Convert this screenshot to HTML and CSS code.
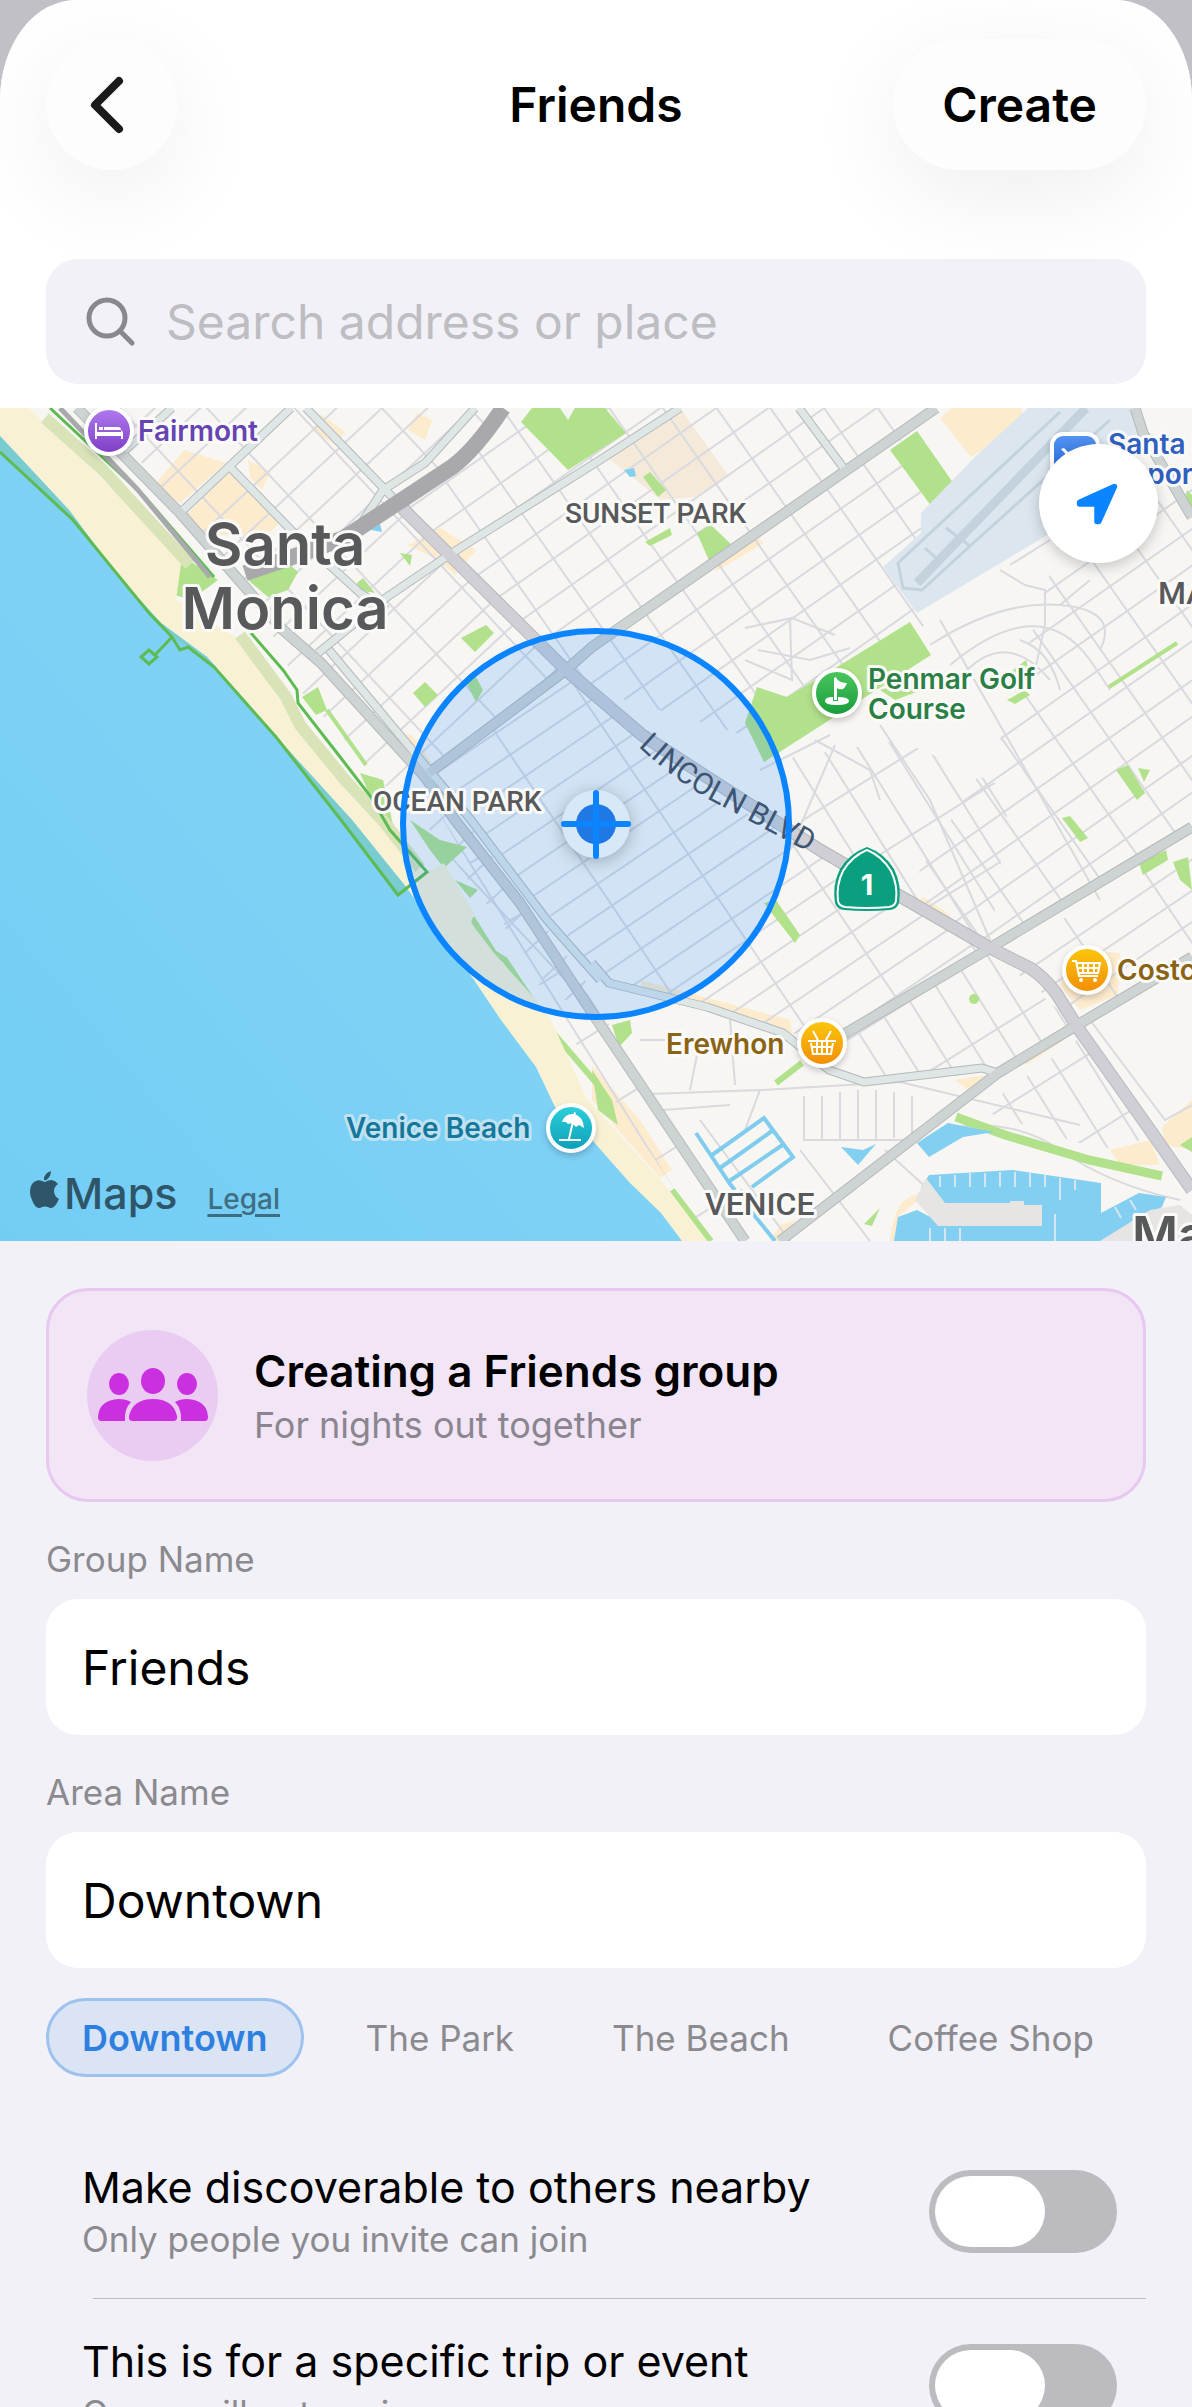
FILE: index.html
```
<!DOCTYPE html>
<html lang="en">
<head>
    <meta charset="UTF-8">
    <meta name="viewport" content="width=device-width, initial-scale=1.0">
    <title>Friends</title>
    <link rel="stylesheet" href="styles.css">
</head>
<body>
    <main class="sheet">
        <header class="top-bar">
            <button type="button" class="back-button" aria-label="Back">
                <svg width="36" height="60" viewBox="0 0 36 60"><path d="M31 6L7 30L31 54"/></svg>
            </button>
            <h1>Friends</h1>
            <button type="submit" form="group-form" class="create-button">Create</button>
        </header>

        <div class="search-row">
            <label class="search">
                <svg width="50" height="50" viewBox="0 0 50 50"><circle cx="21" cy="21" r="18"/><path d="M34 34L46 46"/></svg>
                <input type="search" placeholder="Search address or place" aria-label="Search address or place">
            </label>
        </div>

        <section class="map">
            <svg class="map-canvas" viewBox="0 408 1192 833" preserveAspectRatio="xMidYMid slice">
                <defs>
                    <linearGradient id="sea" x1="0" y1="1" x2="1" y2="0"><stop offset="0" stop-color="#72cdf5"/><stop offset="1" stop-color="#8ad6f4"/></linearGradient>
                    <linearGradient id="purple" x2="0" y2="1"><stop stop-color="#b07cf0"/><stop offset="1" stop-color="#7d3cc4"/></linearGradient>
                    <linearGradient id="green" x2="0" y2="1"><stop stop-color="#4cc75f"/><stop offset="1" stop-color="#179b3b"/></linearGradient>
                    <linearGradient id="orange" x2="0" y2="1"><stop stop-color="#fbc80c"/><stop offset="1" stop-color="#f28c06"/></linearGradient>
                    <linearGradient id="teal" x2="0" y2="1"><stop stop-color="#2fd0dc"/><stop offset="1" stop-color="#0a9fb8"/></linearGradient>
                    <linearGradient id="blue" x2="0" y2="1"><stop stop-color="#5496f2"/><stop offset="1" stop-color="#2060d8"/></linearGradient>
                    <pattern id="grid-a" width="64" height="31" patternUnits="userSpaceOnUse" patternTransform="rotate(-43)"><path class="street" d="M0 1H64M1 0V31"/></pattern>
                    <pattern id="grid-b" width="44" height="62" patternUnits="userSpaceOnUse" patternTransform="rotate(-35)"><path class="street" d="M0 1H44M1 0V62M0 31H44"/></pattern>
                    <pattern id="grid-c" width="92" height="26" patternUnits="userSpaceOnUse" patternTransform="rotate(-34)"><path class="street" d="M0 1H92M1 0V26"/></pattern>
                    <pattern id="grid-d" width="30" height="70" patternUnits="userSpaceOnUse" patternTransform="rotate(-32)"><path class="street" d="M0 1H30M1 0V70"/></pattern>
                    <path id="lincoln" d="M638 746Q676 782 714 802T834 866"/>
                </defs>

                <rect y="408" width="1192" height="833" fill="#f7f6f2"/>

                <!-- Built-up areas -->
                <g fill="#fdebcd">
                    <path d="M230 470L279 523L268 535H207L184 517ZM184 450L226 463L180 503L153 487ZM417 413L432 420L425 440L408 430ZM312 430L322 415L345 432L335 445ZM248 460L270 472L262 490L250 478ZM408 545L440 528L476 550L455 575L438 560Z"/>
                    <path d="M940 418L952 408H1021L1024 423L971 457ZM715 572L764 543L750 530L722 552ZM1059 985L1085 950L1120 953L1118 995L1080 1010ZM1162 1127L1192 1100V1150L1165 1145ZM1110 1150L1150 1140L1160 1165L1120 1165ZM1014 1060L1060 1030L1064 1040L1026 1065ZM910 900L925 898L950 915L945 925Z"/>
                    <path d="M592 1066L640 1120L672 1170L660 1178L592 1100ZM640 980L790 1020L792 1034L646 994ZM398 733L412 735L440 775L430 782ZM955 1080L985 1075L975 1095ZM890 1241Q895 1190 925 1195L898 1217L900 1241ZM780 1225L795 1220L785 1241H770Z"/>
                </g>
                <path fill="#f5ead9" d="M607 457L680 408L728 475L695 497L661 500Z"/>

                <!-- Side streets -->
                <path fill="url(#grid-a)" d="M95 408H500L400 508L566 670L429 773L250 590Z"/>
                <path fill="url(#grid-b)" d="M500 408H940L890 450L940 518L883 567L925 625L760 740L592 690L402 508Z"/>
                <path fill="url(#grid-c)" d="M566 670L700 790L820 850L990 948L830 1043L610 985L429 773Z"/>
                <path fill="url(#grid-b)" d="M1060 540L1192 470V830L990 948L905 895L1000 740Z"/>
                <path fill="url(#grid-d)" d="M764 762L900 740L1010 790L990 948L820 850Z"/>
                <path fill="url(#grid-d)" d="M990 948L1078 1028L998 1073L864 1082L829 1043ZM420 780L600 1010L745 1241H710L560 1020ZM1084 1035L1155 1137L1100 1150L980 1110Z"/>
                <path fill="url(#grid-a)" d="M250 590L429 773L600 1000L560 1000L430 830L380 780L300 690Z"/>
                <path fill="url(#grid-c)" d="M1000 960L1192 835V950L1080 1022Z"/>
                <g class="street">
                    <path d="M930 645Q1000 600 1060 605T1100 650M950 665Q1040 590 1090 660L1110 690M950 690Q1000 620 1050 680M1000 570L1025 585L1045 590V625L1035 670M1010 565L1050 540M1060 605L1090 580M745 628L792 618L835 635M758 650L810 660L850 648M745 660L792 680L790 618M760 770L830 735M815 740L870 770L880 800M880 725L930 800L990 940M835 745L790 850M1020 640Q1050 650 1060 690M940 620L1100 900"/>
                    <path d="M650 1094L760 1090L900 1082L1080 1125M760 1090L745 1130M804 1096V1140H912M822 1096V1140M840 1092V1140M858 1090V1140M876 1090V1140M894 1092V1138M912 1096V1138M700 1040L690 1090M730 1020L735 1085M663 1110L730 1105M640 1040L790 1040M800 1150L870 1241M885 1150L940 1200M700 1120L790 1241M940 1130Q1010 1115 1060 1150T1180 1200M1090 1020L1165 1120L1192 1105"/>
                </g>

                <!-- Parks -->
                <g fill="#b2e18b">
                    <path d="M532 408L521 422L568 470L626 433L605 408L575 408L568 420L560 408ZM248 580L290 565L298 572L288 590L268 597ZM357 583L363 578L375 593L360 590ZM486 625L494 633L475 652L461 638ZM425 682L438 695L425 707L413 693ZM318 687L327 710L316 715L302 697ZM184 557L218 580L191 600L168 593ZM360 773L383 780L393 825L372 800ZM410 820L440 840L467 847L444 868L430 850ZM465 680L475 675L483 690L476 702ZM400 553L412 555L410 566Z"/>
                    <path d="M890 450L917 431L963 497L940 518ZM697 533L711 525L734 547L711 565ZM910 622L931 655L764 762L745 723L757 687L787 697L837 667ZM880 690L940 672L935 685L895 700ZM1007 675L1026 660L1029 670L1010 683ZM1007 700L1025 690L1030 695L1015 704ZM1116 770L1128 765L1145 793L1137 800ZM1138 768L1150 770L1144 782ZM645 542L670 528L672 535L650 546ZM643 477L650 472L666 490L658 497Z"/>
                    <path d="M764 903L776 900L800 935L795 943ZM1139 863L1166 850L1168 860L1143 875ZM1173 862L1188 857L1192 890L1180 880ZM612 1025L630 1020L632 1033L619 1047ZM592 1070L612 1100L618 1125L598 1110ZM1062 818L1070 816L1088 838L1080 842ZM1187 490L1192 495V515L1185 505ZM864 1224L880 1208L872 1226ZM1180 1145L1192 1137V1152ZM455 880L478 890L470 898Z"/>
                    <circle cx="974" cy="999" r="5"/>
                </g>
                <g fill="none" stroke="#b2e18b">
                    <path stroke-width="9" d="M956 1117L1005 1135L1089 1160L1162 1176"/>
                    <path stroke-width="6" d="M776 1083L802 1063M672 1190L711 1241M472 918L494 953L505 960L555 1035L598 1085"/>
                    <path stroke-width="4" d="M1109 687L1177 643M327 710L366 765"/>
                </g>

                <!-- Airport -->
                <path fill="#dce6ee" d="M1028 408H1135L1143 440L1100 500L1044 537L917 613L883 567L921 533V513L975 457Z"/>
                <g fill="none" stroke="#c4d2dd">
                    <path stroke-width="9" d="M1086 408L917 583"/>
                    <path stroke-width="3" d="M1060 412L898 563L903 588L922 590L970 546L1110 420M946 528L970 546M925 548L936 558"/>
                </g>

                <!-- Sea and beach -->
                <path fill="#f8f1d3" d="M0 408H29L103 480L182 557L176 600L240 640L280 700L345 790L425 873L444 863L474 913L471 923L494 953L536 1000L551 1020L586 1097L669 1190L707 1241H600L0 500Z"/>
                <path fill="none" stroke="#d8e3b7" stroke-width="12" d="M45 418L103 470L190 565M240 635L286 697L300 725L345 780L384 822L420 868"/>
                <path fill="url(#sea)" d="M0 436L69 510L119 577L161 623L207 657L245 700L291 753L352 820L406 887L474 980L501 1020L536 1067L555 1107L592 1140L630 1183L661 1213L682 1241H0Z"/>
                <path fill="#79ccd0" d="M0 436L69 510L119 577L161 623L207 657L245 700L291 753L352 820L406 887L398 895L341 820L276 737L214 667L188 647L172 637L149 613L73 520L0 452Z"/>
                <path fill="none" stroke="#5dbb52" stroke-width="3" d="M0 452L73 520L149 613L172 637L180 650L188 647L214 667L276 737L341 820L398 895L427 872L390 830L371 797L344 762L298 703L297 690L283 670L251 633M50 408L145 497L214 577M172 637L155 655M149 650L157 657L149 664L141 657Z"/>
                <g fill="#82cff1">
                    <path d="M929 1175L1013 1170L1101 1183V1213L1139 1193L1166 1197L1162 1207L1101 1241H894L898 1217L917 1210L936 1220V1208L921 1187ZM917 1143L948 1123L994 1132L963 1137L929 1157ZM841 1147L863 1150L876 1144L858 1165ZM624 470L634 468L636 476L630 477ZM371 530L380 524L382 532Z"/>
                </g>
                <path fill="#e6e5e3" d="M926 1178L945 1203H1010V1201H1024V1205H1042V1226H938L915 1200Z"/>
                <path fill="#e6e5e3" d="M1100 1241L1150 1210L1180 1205L1192 1215V1241Z"/>
                <path fill="none" stroke="#d5e6ef" stroke-width="2" d="M940 1176V1187M955 1175V1187M970 1173V1187M985 1173V1187M1000 1172V1187M1015 1172V1187M1030 1173V1187M1045 1175V1187M1060 1178V1200M1075 1180V1190M930 1228V1241M945 1228V1241M960 1228V1241M1055 1214V1241M1115 1207L1121 1218M1130 1200L1136 1210"/>
                <path fill="none" stroke="#80ccee" stroke-width="4" d="M696 1133L712 1157L730 1184L735 1190M712 1155L764 1118L793 1157L752 1187M720 1168L772 1131M728 1182L784 1144M740 1190L750 1210L775 1241"/>

                <!-- Main roads -->
                <g class="road-edge">
                    <path stroke-width="9" d="M680 408L600 460L452 553L387 597L318 653M230 467L291 530L360 593L387 610M329 650L398 733L471 820L547 920L600 980M180 513L291 408M122 453L172 408M306 408L402 507M799 408L845 470M475 408L425 463L383 490L355 533M592 963L609 983L707 1007L783 1033L829 1070L864 1082L982 1068L998 1073"/>
                    <path stroke-width="11" d="M936 408L592 647L566 670L429 773M77 408L180 513L245 587L283 630L321 663L425 777L455 820L520 903L597 1020L646 1093L745 1241M780 1241L998 1073L1074 1027L1192 957M829 1043L990 948L1192 827M1135 408L1143 433L1192 517"/>
                    <path stroke-width="13" d="M402 508L566 670L642 735L820 850L898 895L990 948L1030 968Q1044 977 1056 993L1078 1028L1155 1137L1192 1190"/>
                </g>
                <g class="road">
                    <path stroke="#dfe6e6" stroke-width="7" d="M680 408L600 460L452 553L387 597L318 653M230 467L291 530L360 593L387 610M329 650L398 733L471 820L547 920L600 980M180 513L291 408M122 453L172 408M306 408L402 507M799 408L845 470M475 408L425 463L383 490L355 533M592 963L609 983L707 1007L783 1033L829 1070L864 1082L982 1068L998 1073"/>
                    <path stroke="#ced3d3" stroke-width="9" d="M936 408L592 647L566 670L429 773M77 408L180 513L245 587L283 630L321 663L425 777L455 820L520 903L597 1020L646 1093L745 1241M780 1241L998 1073L1074 1027L1192 957M829 1043L990 948L1192 827M1135 408L1143 433L1192 517"/>
                    <path stroke="#cfcfd5" stroke-width="11" d="M402 508L566 670L642 735L820 850L898 895L990 948L1030 968Q1044 977 1056 993L1078 1028L1155 1137L1192 1190"/>
                    <path stroke="#a9a9ad" stroke-width="16" d="M503 408Q475 450 452 467L402 500L344 538Q300 555 245 573"/>
                    <path stroke="#a9a9ad" stroke-width="5" d="M60 408L138 490L210 577"/>
                </g>

                <!-- Area circle -->
                <circle cx="596" cy="824" r="193" fill="#0a84ff" fill-opacity=".16"/>

                <!-- Place labels -->
                <g class="label district">
                    <text x="565" y="523">SUNSET PARK</text>
                    <text x="373" y="811">OCEAN PARK</text>
                </g>
                <g class="label district-large">
                    <text x="1158" y="604">MAR VISTA</text>
                    <text x="705" y="1215">VENICE</text>
                </g>
                <text class="label road-name"><textPath href="#lincoln">LINCOLN BLVD</textPath></text>
                <g class="label city">
                    <text x="285" y="565">Santa</text>
                    <text x="285" y="629">Monica</text>
                </g>
                <text class="label city-cut" x="1132" y="1252">Marina</text>
                <g class="label place">
                    <text x="138" y="441" fill="#6543b3">Fairmont</text>
                    <text x="868" y="689" fill="#2b7f45">Penmar Golf</text>
                    <text x="868" y="719" fill="#2b7f45">Course</text>
                    <text x="666" y="1054" fill="#8a6414">Erewhon</text>
                    <text x="1117" y="980" fill="#8a6414">Costco</text>
                    <text x="1108" y="454" fill="#2f5fc0">Santa Monica</text>
                    <text x="1108" y="484" fill="#2f5fc0">Airport</text>
                </g>
                <text class="label place beach" x="346" y="1138">Venice Beach</text>

                <circle cx="596" cy="824" r="193" fill="none" stroke="#0a84ff" stroke-width="6"/>

                <!-- Pins -->
                <g class="pin" transform="translate(109 431)">
                    <circle r="23" fill="url(#purple)"/>
                    <path fill="#fff" d="M-14 -8h2v9h24v-2a4 4 0 0 1 2 3v6h-2v-3h-24v3h-2zM-10 -4h4v3h-4zM-5 -4h14a3 3 0 0 1 3 3h-17z"/>
                </g>
                <g class="pin" transform="translate(837 693)">
                    <circle r="23" fill="url(#green)"/>
                    <path fill="#fff" d="M-3 -15L-1 -16L0 -14Q3 -10 10 -10Q8 -5 6 -4Q2 -3 0 -5V7H-3Z"/>
                    <path fill="#fff" d="M-4 4V8H1V4Q12 4 12 8T0 12T-12 8T-4 4Z"/>
                </g>
                <g class="pin" transform="translate(822 1043)">
                    <circle r="23" fill="url(#orange)"/>
                    <path class="line" d="M-11 0L-9 11H9L11 0M-14 -2H14M-11 4H11M-5 -1V11M0 -1V11M5 -1V11M-9 -12L-4 -3M9 -12L4 -3"/>
                </g>
                <g class="pin" transform="translate(1087 970)">
                    <circle r="23" fill="url(#orange)"/>
                    <path class="line" d="M-15 -9H-11L-8 6H11M-10 -7H13L11 3H-9M-9 -2H12M-4 -7V3M1 -7V3M7 -7V3"/>
                    <circle class="wheel" cx="-6" cy="10" r="2"/><circle class="wheel" cx="8" cy="10" r="2"/>
                </g>
                <g class="pin" transform="translate(571 1128)">
                    <circle r="23" fill="url(#teal)"/>
                    <path fill="#fff" d="M-9 -6Q-6 -15 3 -14Q12 -12 13 0L8 -3L5 -1L1 -5L-3 -4L-5 -6ZM3 -16L5 -15L-1 11H-3ZM-12 11H10V13H-12Z"/>
                </g>
                <g class="pin" transform="translate(1075 457)">
                    <rect x="-23" y="-23" width="46" height="46" rx="11" fill="url(#blue)"/>
                    <path fill="#fff" d="M-14 -8L-11 -9L-7 -5L8 -8L-3 4Z"/>
                </g>

                <g>
                    <path fill="#0a9f7e" d="M867 847Q884 853 894 869Q902 885 899 903Q897 909 890 910Q867 912 844 910Q837 909 835 903Q832 885 840 869Q850 853 867 847Z"/>
                    <path fill="none" stroke="#fff" stroke-width="2" d="M867 850Q882 856 891 871Q898 885 896 901Q895 906 889 907Q867 909 845 907Q839 906 838 901Q836 885 843 871Q852 856 867 850Z"/>
                    <text class="shield-number" x="867" y="895">1</text>
                </g>

                <!-- Crosshair -->
                <circle class="crosshair-halo" cx="596" cy="824" r="34"/>
                <circle cx="596" cy="824" r="20" fill="#1f78e4"/>
                <path fill="none" stroke="#0a84ff" stroke-width="6" stroke-linecap="round" d="M564 824H628M596 793V856"/>
            </svg>

            <button type="button" class="locate-button" aria-label="Current location">
                <svg width="44" height="44" viewBox="0 0 48 48"><path d="M43 5L5 22V24H24V43H26Z"/></svg>
            </button>

            <div class="attribution">
                <span class="maps-logo">
                    <svg width="30" height="38" viewBox="0 0 30 38"><path d="M21 0Q21 4 18.500 7T14 9Q14 5 16 3T21 0ZM15 11Q18 9 22 9Q26 10 28 13Q24 16 24 20Q24 25 29 28Q25 37 21 37Q19 37 18 36Q15 35 12 36Q11 37 9 37Q5 37 2 29Q0 25 0 21Q0 14 4 11Q8 8 12 10Z"/></svg>
                    Maps
                </span>
                <a href="#legal">Legal</a>
            </div>
        </section>

        <form id="group-form" class="group-form">
            <div class="group-card">
                <span class="group-icon">
                    <svg width="112" height="54" viewBox="0 0 112 54">
                        <ellipse cx="22" cy="16" rx="10" ry="11"/><ellipse cx="90" cy="16" rx="10" ry="11"/><ellipse cx="56" cy="13" rx="12" ry="13"/>
                        <path d="M4 53Q1 53 1 49Q2 32 22 31Q29 31 34 34Q27 41 28 53ZM108 53Q111 53 111 49Q110 32 90 31Q83 31 78 34Q85 41 84 53ZM36 53Q31 53 32 48Q36 31 56 31T80 48Q81 53 76 53Z"/>
                    </svg>
                </span>
                <div>
                    <h2>Creating a Friends group</h2>
                    <p>For nights out together</p>
                </div>
            </div>

            <div class="field">
                <label for="group-name">Group Name</label>
                <input type="text" id="group-name" value="Friends">
            </div>

            <div class="field">
                <label for="area-name">Area Name</label>
                <input type="text" id="area-name" value="Downtown">
            </div>

            <div class="chips">
                <button type="button" class="chip selected">Downtown</button>
                <button type="button" class="chip">The Park</button>
                <button type="button" class="chip">The Beach</button>
                <button type="button" class="chip">Coffee Shop</button>
            </div>

            <div class="options">
                <label class="option">
                    <span>
                        <strong>Make discoverable to others nearby</strong>
                        <small>Only people you invite can join</small>
                    </span>
                    <input type="checkbox" class="toggle">
                </label>
                <label class="option">
                    <span>
                        <strong>This is for a specific trip or event</strong>
                        <small>Group will not expire</small>
                    </span>
                    <input type="checkbox" class="toggle">
                </label>
            </div>
        </form>
    </main>
</body>
</html>
```
FILE: styles.css
```
* {
    box-sizing: border-box;
}

body {
    margin: 0;
    height: 100vh;
    overflow: hidden;
    background-color: #c1c0c6;
    font-family: Inter, "Liberation Sans", sans-serif;
    color: #000;
}

button, input {
    font-family: inherit;
}

h1, h2, p {
    margin: 0;
}

.sheet {
    height: 100vh;
    overflow: hidden;
    background-color: #f2f1f7;
    border-radius: 76px 76px 0 0 / 100px 100px 0 0;
}

/* Header */
.top-bar {
    display: grid;
    grid-template-columns: 1fr auto 1fr;
    align-items: center;
    padding: 39px 46px 89px;
    background-color: #fff;
}

h1 {
    font-size: 48px;
    font-weight: 600;
}

.back-button, .create-button {
    height: 131px;
    border: none;
    border-radius: 66px;
    background-color: #fdfdfd;
    box-shadow: 0 24px 100px rgba(0, 0, 0, 0.07);
}

.back-button {
    display: flex;
    align-items: center;
    justify-content: center;
    width: 131px;
    padding: 0 12px 0 0;
}

.back-button path {
    fill: none;
    stroke: #1a1a1a;
    stroke-width: 8;
    stroke-linecap: round;
    stroke-linejoin: round;
}

.create-button {
    justify-self: end;
    padding: 0 49px;
    font-size: 48px;
    font-weight: 600;
    color: #000;
}

.search-row {
    padding: 0 46px 24px;
    background-color: #fff;
}

.search {
    display: flex;
    align-items: center;
    gap: 30px;
    height: 125px;
    padding: 0 40px;
    border-radius: 32px;
    background-color: #f2f1f7;
}

.search svg {
    flex: none;
    fill: none;
    stroke: #88888d;
    stroke-width: 5;
    stroke-linecap: round;
}

.search input {
    flex: 1;
    min-width: 0;
    padding: 0;
    border: none;
    background: none;
    font-size: 48px;
}

.search input::placeholder {
    color: #bdbdc2;
}

/* Map */
.map {
    position: relative;
    height: 833px;
    overflow: hidden;
}

.map-canvas {
    display: block;
    width: 100%;
    height: 100%;
}

.street {
    fill: none;
    stroke: #d9d9df;
    stroke-width: 2;
}

.road, .road-edge {
    fill: none;
    stroke-linejoin: round;
}

.road-edge {
    stroke: #b4b9bc;
}

.label {
    paint-order: stroke;
    stroke: #fafaf8;
    stroke-width: 6px;
    stroke-linejoin: round;
    fill: #58595b;
}

.district, .district-large {
    font-family: Roboto, sans-serif;
    font-weight: 500;
    font-size: 28px;
}

.district-large {
    font-size: 32px;
}

.road-name {
    font-family: Roboto, sans-serif;
    font-size: 30px;
    fill: #3d5573;
    stroke: none;
}

.city, .city-cut {
    font-size: 58px;
    font-weight: 600;
}

.city {
    text-anchor: middle;
}

.city-cut {
    font-size: 50px;
}

.place {
    font-size: 28px;
    font-weight: 600;
}

.beach {
    fill: #15789a;
    stroke: #bfe2f3;
}

.pin {
    stroke: #fff;
    stroke-width: 4;
    filter: drop-shadow(0 3px 3px rgba(0, 0, 0, 0.2));
}

.pin path {
    stroke: none;
}

.pin .line {
    fill: none;
    stroke: #fff;
    stroke-width: 2;
}

.pin .wheel {
    fill: #fff;
    stroke: none;
}

.shield-number {
    fill: #fff;
    font-size: 29px;
    font-weight: 700;
    text-anchor: middle;
}

.crosshair-halo {
    fill: #d7e9f8;
    filter: drop-shadow(0 3px 8px rgba(0, 0, 0, 0.25));
}

.locate-button {
    position: absolute;
    top: 36px;
    right: 34px;
    display: flex;
    align-items: center;
    justify-content: center;
    width: 119px;
    height: 119px;
    padding: 0 4px 0 0;
    border: none;
    border-radius: 50%;
    background-color: #fff;
    box-shadow: 0 4px 14px rgba(0, 0, 0, 0.2);
}

.locate-button path {
    fill: #0a84ff;
    stroke: #0a84ff;
    stroke-width: 6;
    stroke-linejoin: round;
}

.attribution {
    position: absolute;
    left: 30px;
    bottom: 22px;
    display: flex;
    align-items: baseline;
    gap: 30px;
}

.maps-logo {
    display: flex;
    align-items: baseline;
    gap: 4px;
    font-size: 43px;
    font-weight: 500;
    color: #2f5668;
}

.maps-logo svg {
    fill: #2f5668;
}

.attribution a {
    font-size: 28px;
    font-weight: 500;
    color: #3f6d84;
    text-underline-offset: 5px;
    text-decoration-thickness: 3px;
}

/* Form */
.group-form {
    padding: 47px 46px 0;
}

.group-card {
    display: flex;
    align-items: center;
    gap: 36px;
    height: 214px;
    padding: 0 38px;
    border: 3px solid #e8c7f0;
    border-radius: 42px;
    background-color: #f1e5f6;
}

.group-icon {
    display: flex;
    align-items: center;
    justify-content: center;
    width: 131px;
    height: 131px;
    border-radius: 50%;
    background-color: #eaccf3;
    fill: #cb30e0;
}

h2 {
    font-size: 44px;
    font-weight: 600;
    line-height: 60px;
}

.group-card p {
    font-size: 36px;
    line-height: 48px;
    color: #8a858f;
}

.field label {
    display: block;
    padding: 33px 0 16px;
    font-size: 35px;
    line-height: 48px;
    color: #8a8a8f;
}

.field input {
    width: 100%;
    height: 136px;
    padding: 0 36px;
    border: none;
    border-radius: 32px;
    background-color: #fff;
    font-size: 48px;
}

.chips {
    display: flex;
    gap: 26px;
    margin-top: 30px;
}

.chip {
    height: 79px;
    padding: 0 33px;
    border: 3px solid transparent;
    border-radius: 40px;
    background: none;
    font-size: 35px;
    color: #8a8a8f;
    white-space: nowrap;
}

.chip.selected {
    border-color: #9dc2ee;
    background-color: #dae4f4;
    font-size: 36px;
    font-weight: 600;
    color: #2d7fe0;
}

.options {
    margin-top: 47px;
}

.option {
    position: relative;
    display: flex;
    align-items: center;
    justify-content: space-between;
    height: 174px;
    padding: 0 29px 0 36px;
}

/* Divider is inset on the left only */
.option + .option::before {
    content: "";
    position: absolute;
    top: 0;
    left: 47px;
    right: 0;
    border-top: 1px solid #bbbbc0;
}

.option strong, .option small {
    display: block;
}

.option strong {
    font-size: 43px;
    font-weight: 400;
    line-height: 56px;
}

.option small {
    font-size: 35px;
    line-height: 48px;
    color: #8a8a8f;
}

.toggle {
    appearance: none;
    flex: none;
    width: 188px;
    height: 83px;
    margin: 0;
    padding: 6px;
    border-radius: 42px;
    background-color: #bcbbc0;
}

.toggle::before {
    content: "";
    display: block;
    width: 110px;
    height: 71px;
    border-radius: 36px;
    background-color: #fff;
}

.toggle:checked {
    background-color: #34c759;
}

.toggle:checked::before {
    margin-left: auto;
}
```
